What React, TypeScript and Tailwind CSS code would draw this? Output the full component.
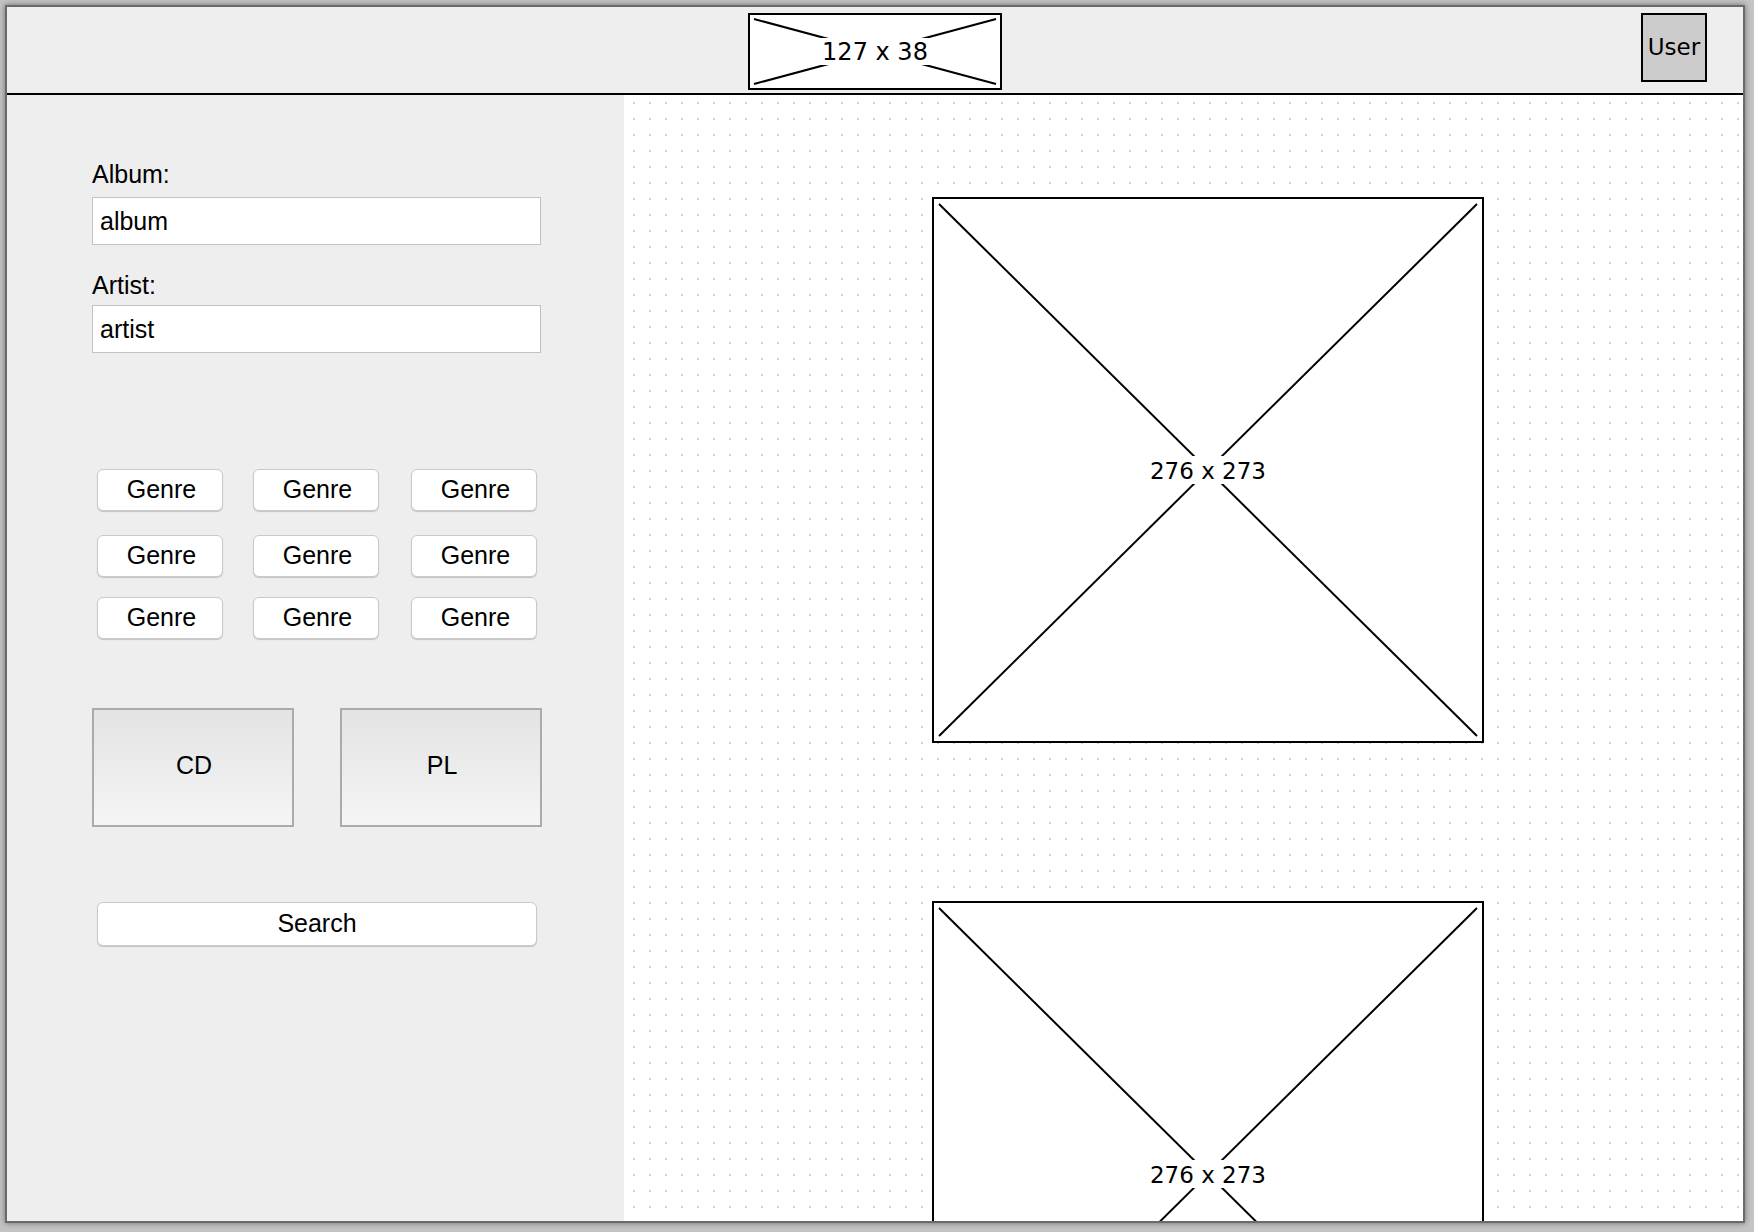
import React from 'react';

const comic = "font-['Comic_Sans_MS','DejaVu_Sans',sans-serif]";

interface PlaceholderProps {
  w: number;
  h: number;
  inset: number;
  label: string;
  className: string;
  textClassName: string;
}

// wireframe image placeholder: box with an X and its size in the middle
function Placeholder({ w, h, inset, label, className, textClassName }: PlaceholderProps) {
  return (
    <div className={`relative shrink-0 border-2 border-black bg-white ${className}`}>
      <svg className="absolute inset-0" width={w} height={h} viewBox={`0 0 ${w} ${h}`}>
        <line x1={inset} y1={inset} x2={w - inset} y2={h - inset} stroke="black" strokeWidth="2" />
        <line x1={w - inset} y1={inset} x2={inset} y2={h - inset} stroke="black" strokeWidth="2" />
      </svg>
      <div className="absolute inset-0 flex items-center justify-center">
        <span className={`bg-white px-[2px] text-black ${comic} ${textClassName}`}>{label}</span>
      </div>
    </div>
  );
}

function GenreButton() {
  return (
    <button className="w-[126px] h-[42px] rounded-[6px] border border-[#c9c9c9] bg-white shadow-[0_1px_1px_rgba(0,0,0,0.18)] text-[25px] text-black pl-[3px] pb-[2px]">
      Genre
    </button>
  );
}

function GenreRow({ className = '' }: { className?: string }) {
  return (
    <div className={`flex ${className}`}>
      <GenreButton />
      <div className="ml-[30px]">
        <GenreButton />
      </div>
      <div className="ml-[32px]">
        <GenreButton />
      </div>
    </div>
  );
}

export default function App() {
  return (
    <div className="w-[1754px] h-[1232px] bg-[#c4c4c4] p-[5px] overflow-hidden">
      <div className="w-[1740px] h-[1218px] border-2 border-[#6a6a6a] bg-[#eeeeee] flex flex-col shadow-[0_0_6px_rgba(0,0,0,0.45)]">
        <header className="h-[88px] shrink-0 border-b-2 border-black grid grid-cols-[1fr_auto_1fr] items-start pt-[6px]">
          <div />
          <Placeholder
            w={250}
            h={73}
            inset={4}
            label="127 x 38"
            className="w-[254px] h-[77px]"
            textClassName="text-[24px] leading-[25px] pt-[2px]"
          />
          <div className="flex justify-end pr-[36px]">
            <div
              className={`w-[66px] h-[69px] border-2 border-black bg-[#cccccc] flex items-center justify-center text-[23px] text-black ${comic}`}
            >
              User
            </div>
          </div>
        </header>

        <div className="flex flex-1 min-h-0">
          <aside className="w-[617px] shrink-0 bg-[#eeeeee] flex flex-col pt-[64px] text-black text-[25px] leading-[30px] font-['Liberation_Sans',Arial,sans-serif]">
            <div className="pl-[85px] flex flex-col">
              <label>Album:</label>
              <input
                readOnly
                value="album"
                className="mt-[8px] w-[449px] h-[48px] border border-[#c2c2c2] bg-white pl-[7px] outline-none"
              />
              <label className="mt-[25px]">Artist:</label>
              <input
                readOnly
                value="artist"
                className="mt-[5px] w-[449px] h-[48px] border border-[#c2c2c2] bg-white pl-[7px] outline-none"
              />
            </div>

            <div className="mt-[116px] pl-[90px] flex flex-col">
              <GenreRow />
              <GenreRow className="mt-[24px]" />
              <GenreRow className="mt-[20px]" />
            </div>

            <div className="mt-[69px] pl-[85px] flex gap-[46px]">
              <button className="w-[202px] h-[119px] border-2 border-[#ababab] bg-gradient-to-b from-[#e3e3e3] to-[#f5f5f5] text-[25px] pb-[6px] pl-[2px]">
                CD
              </button>
              <button className="w-[202px] h-[119px] border-2 border-[#ababab] bg-gradient-to-b from-[#e3e3e3] to-[#f5f5f5] text-[25px] pb-[6px] pl-[2px]">
                PL
              </button>
            </div>

            <div className="mt-[75px] pl-[90px]">
              <button className="w-[440px] h-[44px] rounded-[6px] border border-[#c9c9c9] bg-white shadow-[0_1px_1px_rgba(0,0,0,0.18)] text-[25px] pb-[2px]">
                Search
              </button>
            </div>
          </aside>

          <main className="flex-1 overflow-hidden bg-white bg-[image:conic-gradient(at_2px_2px,transparent_75%,#d2d2d2_0)] bg-[length:16px_16px] bg-[position:9px_7px] pl-[308px] pt-[102px] flex flex-col gap-[158px]">
            <Placeholder
              w={548}
              h={542}
              inset={5}
              label="276 x 273"
              className="w-[552px] h-[546px]"
              textClassName="text-[23px] leading-[26px] pt-[2px]"
            />
            <Placeholder
              w={548}
              h={542}
              inset={5}
              label="276 x 273"
              className="w-[552px] h-[546px]"
              textClassName="text-[23px] leading-[26px] pt-[2px]"
            />
          </main>
        </div>
      </div>
    </div>
  );
}
